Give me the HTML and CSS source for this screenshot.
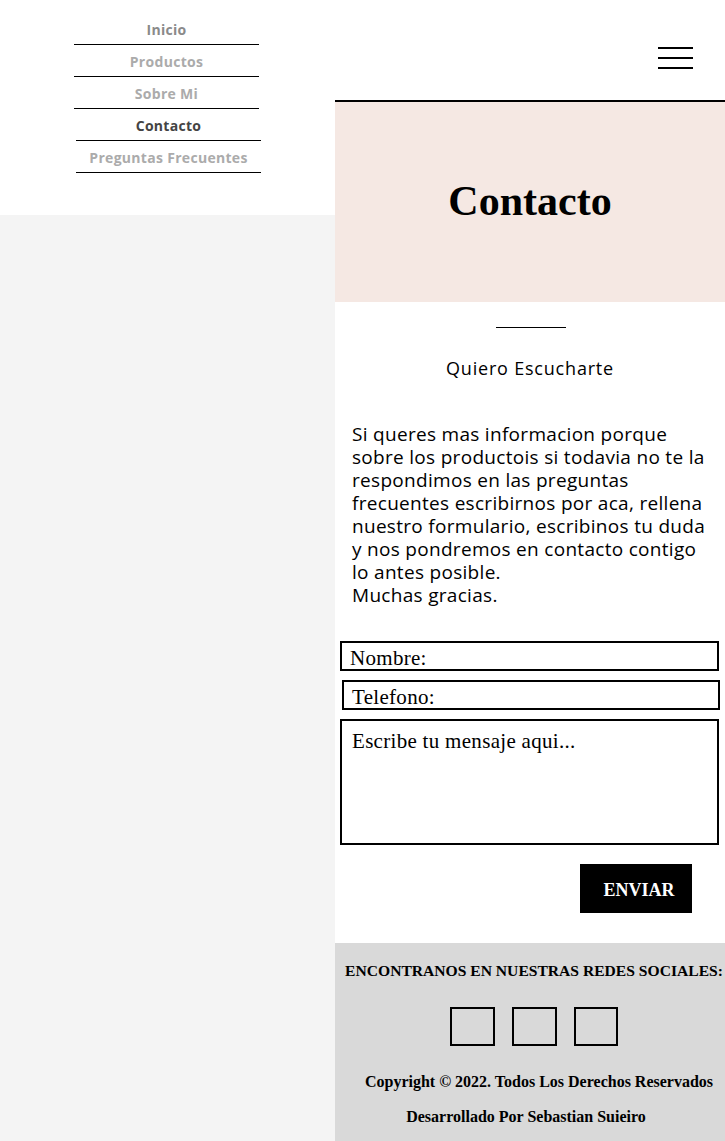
FILE: index.html
```html
<!DOCTYPE html>
<html lang="es">
<head>
<meta charset="utf-8">
<title>Contacto</title>
<link rel="stylesheet" href="styles.css">
</head>
<body>
<div class="page">
  <aside class="sidebar">
    <nav class="menu">
      <ul class="menu-list">
        <li class="menu-item item-inicio">Inicio</li>
        <li class="menu-item item-muted">Productos</li>
        <li class="menu-item item-muted">Sobre Mi</li>
        <li class="menu-item item-active shifted">Contacto</li>
        <li class="menu-item item-muted shifted">Preguntas Frecuentes</li>
      </ul>
    </nav>
  </aside>
  <main class="main">
    <header class="topbar">
      <button class="burger" aria-label="menu">
        <span class="burger-line"></span>
        <span class="burger-line"></span>
        <span class="burger-line"></span>
      </button>
    </header>
    <section class="banner">
      <h1 class="banner-title">Contacto</h1>
    </section>
    <section class="intro">
      <div class="divider"></div>
      <h2 class="subtitle">Quiero Escucharte</h2>
      <p class="text">Si queres mas informacion porque sobre los productois si todavia no te la respondimos en las preguntas frecuentes escribirnos por aca, rellena nuestro formulario, escribinos tu duda y nos pondremos en contacto contigo lo antes posible.</p>
      <p class="text text-end">Muchas gracias.</p>
    </section>
    <form class="form">
      <label class="field">Nombre:</label>
      <label class="field field-shift">Telefono:</label>
      <label class="field field-area">Escribe tu mensaje aqui...</label>
      <div class="actions">
        <button type="button" class="send">ENVIAR</button>
      </div>
    </form>
    <footer class="footer">
      <h3 class="footer-title">ENCONTRANOS EN NUESTRAS REDES SOCIALES:</h3>
      <div class="socials">
        <span class="social"></span>
        <span class="social"></span>
        <span class="social social-narrow"></span>
      </div>
      <p class="copy">Copyright © 2022. Todos Los Derechos Reservados</p>
      <p class="dev">Desarrollado Por Sebastian Suieiro</p>
    </footer>
  </main>
</div>
</body>
</html>
```

FILE: styles.css
```css
* { box-sizing: border-box; }
html, body { margin: 0; padding: 0; }
body { background: #fff; font-family: "Open Sans", "Noto Sans", sans-serif; color: #000; }

.page { display: flex; width: 725px; min-height: 1141px; }

.sidebar { width: 335px; flex: 0 0 335px; background: #f4f4f4; }
.menu { background: #fff; height: 215px; padding-top: 13px; }
.menu-list { list-style: none; margin: 0; padding: 0; }
.menu-item {
  width: 185px; margin-left: 74px;
  height: 32px; line-height: 33px;
  border-bottom: 1px solid #000;
  text-align: center; font-weight: 700; font-size: 14px; letter-spacing: 0.3px;
}
.menu-item.shifted { margin-left: 76px; }
.item-inicio { color: #8a8a8a; }
.item-muted { color: #ababab; }
.item-active { color: #444; }

.main { width: 390px; flex: 0 0 390px; display: flex; flex-direction: column; }

.topbar { height: 102px; border-bottom: 2px solid #000; display: flex; justify-content: flex-end; padding: 47px 32px 0 0; }
.burger { width: 35px; height: 24px; padding: 0; border: 0; background: none; display: flex; flex-direction: column; gap: 8px; }
.burger-line { display: block; width: 35px; height: 2px; background: #000; }

.banner { height: 200px; background: #f5e8e3; display: flex; align-items: center; justify-content: center; }
.banner-title { margin: 0; font-family: "Liberation Serif", serif; font-weight: 700; font-size: 42px; padding-bottom: 2px; }

.intro { padding: 25px 17px 0; display: flex; flex-direction: column; align-items: center; }
.divider { width: 70px; height: 1px; background: #000; margin-left: 1px; }
.subtitle { margin: 29px 0 0; font-weight: 400; font-size: 18px; line-height: 22px; letter-spacing: 0.8px; }
.text { margin: 44px 0 0; font-size: 19px; line-height: 23px; letter-spacing: 0.3px; align-self: stretch; }
.text-end { margin-top: 0; }

.form { padding: 34px 6px 0 5px; display: flex; flex-direction: column; }
.field {
  display: block; border: 2px solid #000; height: 30px;
  font-family: "Liberation Serif", serif; font-size: 21px; line-height: 30px; letter-spacing: 0.3px;
  padding-left: 8px; width: 379px;
}
.field-shift { margin: 9px 0 0 2px; width: 378px; }
.field-area { margin-top: 9px; height: 126px; line-height: 24px; padding: 8px 0 0 10px; }
.actions { display: flex; justify-content: flex-end; padding: 19px 27px 0 0; height: 98px; }
.send {
  width: 112px; height: 49px; background: #000; color: #fff; border: 0;
  font-family: "Liberation Serif", serif; font-weight: 700; font-size: 18px; padding: 3px 0 0 6px;
}

.footer { background: #d9d9d9; flex: 1; padding: 18px 0 0; text-align: center; font-family: "Liberation Serif", serif; font-weight: 700; }
.footer-title { margin: 0; font-size: 15.6px; line-height: 20px; padding-left: 8px; }
.socials { display: flex; justify-content: center; gap: 17px; margin-top: 26px; padding-left: 7px; }
.social { width: 45px; height: 39px; border: 2px solid #000; }
.social-narrow { width: 44px; }
.copy { margin: 26px 0 0; font-size: 16px; line-height: 20px; padding-left: 18px; }
.dev { margin: 15px 0 0; font-size: 16px; line-height: 20px; padding-right: 8px; }
```
